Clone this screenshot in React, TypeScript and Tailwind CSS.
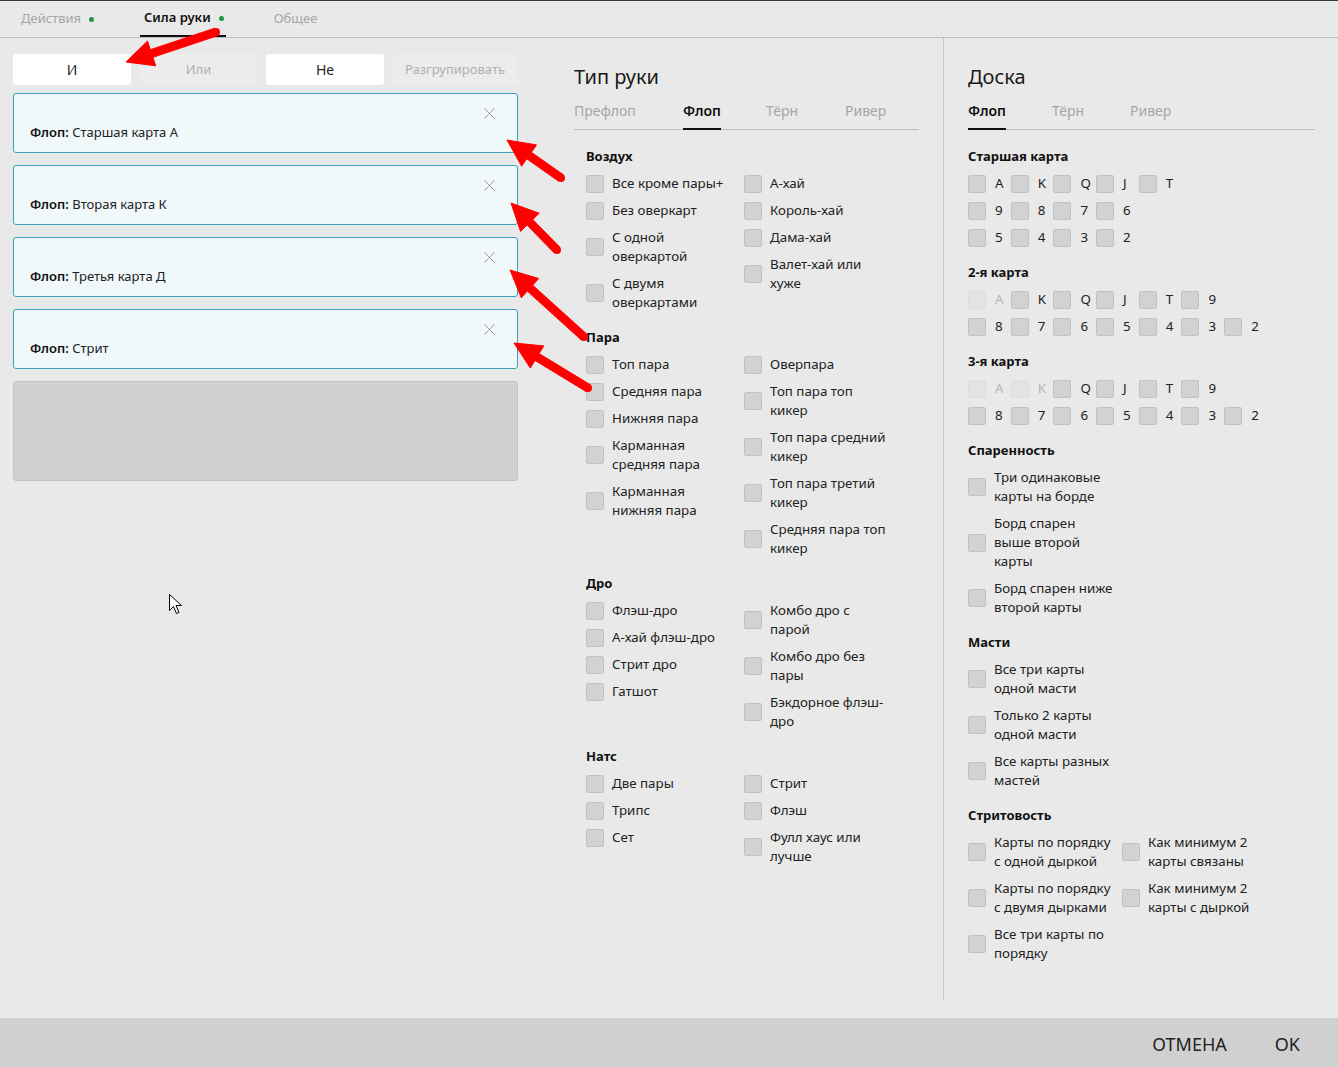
import React from "react";

function Box({ disabled }: { disabled?: boolean }) {
  return (
    <span
      className={
        disabled
          ? "block w-[18px] h-[18px] shrink-0 rounded-[2px] border border-[#dedede] bg-[#e3e3e3]"
          : "block w-[18px] h-[18px] shrink-0 rounded-[2px] border border-[#c2c2c2] bg-[#d2d2d2]"
      }
    />
  );
}

function Item({ lines }: { lines: string[] }) {
  return (
    <div className="flex items-center gap-2">
      <Box />
      <div className="text-[13.33px] leading-[19px] text-[#222] whitespace-nowrap">
        {lines.map((l, i) => (
          <div key={i}>{l}</div>
        ))}
      </div>
    </div>
  );
}

function Col({ items, w }: { items: string[][]; w?: string }) {
  return (
    <div className={"flex flex-col gap-2 " + (w ?? "")}>
      {items.map((it, i) => (
        <Item key={i} lines={it} />
      ))}
    </div>
  );
}

function SectionTitle({ children }: { children: React.ReactNode }) {
  return <div className="text-[13px] font-bold leading-[20px] text-[#111]">{children}</div>;
}

function Section({
  title,
  left,
  right,
  colW,
  first,
}: {
  title: string;
  left: string[][];
  right?: string[][];
  colW: string;
  first?: boolean;
}) {
  return (
    <div className={first ? "" : "mt-[15px]"}>
      <SectionTitle>{title}</SectionTitle>
      <div className="mt-2 flex items-start">
        <Col items={left} w={colW} />
        {right && <Col items={right} />}
      </div>
    </div>
  );
}

function Rank({ label, disabled }: { label: string; disabled?: boolean }) {
  return (
    <div className="w-[42.7px] flex items-center gap-[9px]">
      <Box disabled={disabled} />
      <span
        className={
          "text-[13.33px] leading-[19px] " + (disabled ? "text-[#b4b4b4]" : "text-[#222]")
        }
      >
        {label}
      </span>
    </div>
  );
}

function RankSection({
  title,
  rows,
  disabled,
}: {
  title: string;
  rows: string[][];
  disabled: string[];
}) {
  return (
    <div className="mt-[15px]">
      <SectionTitle>{title}</SectionTitle>
      <div className="mt-2 flex flex-col gap-2">
        {rows.map((r, i) => (
          <div key={i} className="flex">
            {r.map((l) => (
              <Rank key={l} label={l} disabled={disabled.includes(l)} />
            ))}
          </div>
        ))}
      </div>
    </div>
  );
}

function Tabs({ tabs, widths, active }: { tabs: string[]; widths: string[]; active: number }) {
  return (
    <div className="flex h-[39px] border-b border-[#bdbdbd]">
      {tabs.map((t, i) => (
        <div key={t} className={"h-[39px] -mb-px " + widths[i]}>
          <span
            className={
              "inline-block h-[39px] pt-[10px] text-[14px] leading-[20px] " +
              (i === active
                ? "font-semibold text-[#111] border-b-2 border-[#111]"
                : "text-[#a6a6a6]")
            }
          >
            {t}
          </span>
        </div>
      ))}
    </div>
  );
}

function CloseX() {
  return (
    <svg width="11" height="11" viewBox="0 0 11 11" className="absolute top-[14px] right-[22px]">
      <path d="M0.5 0.5 L10.5 10.5 M10.5 0.5 L0.5 10.5" stroke="#9a9a9a" strokeWidth="1" fill="none" />
    </svg>
  );
}

function Card({ value }: { value: string }) {
  return (
    <div className="relative h-[60px] rounded-[3px] border border-[#3aa0b6] bg-[#f0f8fa] pl-[16px] pt-[29px]">
      <CloseX />
      <div className="text-[13px] leading-[18px] text-[#222]">
        <span className="font-semibold text-[#111]">Флоп:</span> {value}
      </div>
    </div>
  );
}

function Arrow({ t, h }: { t: [number, number]; h: [number, number] }) {
  const dx = h[0] - t[0];
  const dy = h[1] - t[1];
  const len = Math.hypot(dx, dy);
  const ux = dx / len;
  const uy = dy / len;
  const nx = -uy;
  const ny = ux;
  const w = 8;
  const L = 27;
  const W = 26;
  const bx = h[0] - ux * L;
  const by = h[1] - uy * L;
  const pts = [
    [t[0] + (nx * w) / 2, t[1] + (ny * w) / 2],
    [bx + (nx * w) / 2, by + (ny * w) / 2],
    [bx + (nx * W) / 2, by + (ny * W) / 2],
    [h[0], h[1]],
    [bx - (nx * W) / 2, by - (ny * W) / 2],
    [bx - (nx * w) / 2, by - (ny * w) / 2],
    [t[0] - (nx * w) / 2, t[1] - (ny * w) / 2],
  ]
    .map((p) => p[0].toFixed(1) + "," + p[1].toFixed(1))
    .join(" ");
  return (
    <g fill="#ff0000">
      <polygon points={pts} strokeLinejoin="round" stroke="#ff0000" strokeWidth="1" />
      <circle cx={t[0]} cy={t[1]} r={w / 2} />
    </g>
  );
}

export default function App() {
  return (
    <div className="relative h-[1067px] w-full overflow-hidden flex flex-col bg-[#e9e9e9] border-t border-[#3a3a3a] font-['Noto_Sans',sans-serif]">
      {/* header */}
      <div className="h-[37px] shrink-0 border-b border-[#bcbcbc] flex pl-[17px]">
        <div className="h-full w-[82px] px-[4px] flex items-center text-[13px] text-[#a6a6a6]">
          <span>Действия</span>
          <span className="ml-[8px] w-[5px] h-[5px] rounded-full bg-[#1f9a3a]" />
        </div>
        <div className="h-full ml-[41px] pl-[4px] pr-[2px] flex items-center text-[13px] font-semibold text-[#111] border-b-2 border-[#111]">
          <span>Сила руки</span>
          <span className="ml-[8px] w-[5px] h-[5px] rounded-full bg-[#1f9a3a]" />
        </div>
        <div className="h-full ml-[44px] px-[4px] flex items-center text-[13px] text-[#a6a6a6]">
          <span>Общее</span>
        </div>
      </div>

      {/* main */}
      <div className="flex-1 flex min-h-0">
        {/* left */}
        <div className="w-[531px] shrink-0 px-[13px] pt-[16px]">
          <div className="flex">
            <div className="w-[118px] h-[31px] rounded-[3px] bg-white flex items-center justify-center text-[14px] text-[#222]">
              И
            </div>
            <div className="ml-[9px] w-[117px] h-[31px] rounded-[3px] bg-[#ececec] flex items-center justify-center text-[13px] text-[#b0b0b0]">
              Или
            </div>
            <div className="ml-[9px] w-[118px] h-[31px] rounded-[3px] bg-white flex items-center justify-center text-[14px] text-[#222]">
              Не
            </div>
            <div className="ml-[8px] flex-1 h-[31px] rounded-[3px] bg-[#ececec] flex items-center justify-center text-[13px] text-[#b0b0b0]">
              Разгрупировать
            </div>
          </div>
          <div className="mt-[8px] flex flex-col gap-[12px]">
            <Card value="Старшая карта А" />
            <Card value="Вторая карта К" />
            <Card value="Третья карта Д" />
            <Card value="Стрит" />
            <div className="h-[100px] rounded-[3px] border border-[#c3c3c3] bg-[#d0d0d0]" />
          </div>
        </div>

        {/* middle */}
        <div className="w-[412px] shrink-0 pl-[43px] pr-[24px] pt-[25px]">
          <div className="text-[20px] leading-[28px] text-[#1a1a1a]">Тип руки</div>
          <Tabs
            tabs={["Префлоп", "Флоп", "Тёрн", "Ривер"]}
            widths={["w-[109px]", "w-[83px]", "w-[79px]", ""]}
            active={1}
          />
          <div className="pl-[12px] pt-[16px]">
            <Section
              first
              title="Воздух"
              colW="w-[158px]"
              left={[["Все кроме пары+"], ["Без оверкарт"], ["С одной", "оверкартой"], ["С двумя", "оверкартами"]]}
              right={[["А-хай"], ["Король-хай"], ["Дама-хай"], ["Валет-хай или", "хуже"]]}
            />
            <Section
              title="Пара"
              colW="w-[158px]"
              left={[["Топ пара"], ["Средняя пара"], ["Нижняя пара"], ["Карманная", "средняя пара"], ["Карманная", "нижняя пара"]]}
              right={[
                ["Оверпара"],
                ["Топ пара топ", "кикер"],
                ["Топ пара средний", "кикер"],
                ["Топ пара третий", "кикер"],
                ["Средняя пара топ", "кикер"],
              ]}
            />
            <Section
              title="Дро"
              colW="w-[158px]"
              left={[["Флэш-дро"], ["А-хай флэш-дро"], ["Стрит дро"], ["Гатшот"]]}
              right={[["Комбо дро с", "парой"], ["Комбо дро без", "пары"], ["Бэкдорное флэш-", "дро"]]}
            />
            <Section
              title="Натс"
              colW="w-[158px]"
              left={[["Две пары"], ["Трипс"], ["Сет"]]}
              right={[["Стрит"], ["Флэш"], ["Фулл хаус или", "лучше"]]}
            />
          </div>
        </div>

        {/* right */}
        <div className="flex-1 border-l border-[#c9c9c9] mb-[18px] pl-[24px] pr-[23px] pt-[25px]">
          <div className="text-[20px] leading-[28px] text-[#1a1a1a]">Доска</div>
          <Tabs tabs={["Флоп", "Тёрн", "Ривер"]} widths={["w-[84px]", "w-[78px]", ""]} active={0} />
          <div className="pt-[16px]">
            <div>
              <SectionTitle>Старшая карта</SectionTitle>
              <div className="mt-2 flex flex-col gap-2">
                {[
                  ["A", "K", "Q", "J", "T"],
                  ["9", "8", "7", "6"],
                  ["5", "4", "3", "2"],
                ].map((r, i) => (
                  <div key={i} className="flex">
                    {r.map((l) => (
                      <Rank key={l} label={l} />
                    ))}
                  </div>
                ))}
              </div>
            </div>
            <RankSection
              title="2-я карта"
              rows={[
                ["A", "K", "Q", "J", "T", "9"],
                ["8", "7", "6", "5", "4", "3", "2"],
              ]}
              disabled={["A"]}
            />
            <RankSection
              title="3-я карта"
              rows={[
                ["A", "K", "Q", "J", "T", "9"],
                ["8", "7", "6", "5", "4", "3", "2"],
              ]}
              disabled={["A", "K"]}
            />
            <Section
              title="Спаренность"
              colW="w-[154px]"
              left={[
                ["Три одинаковые", "карты на борде"],
                ["Борд спарен", "выше второй", "карты"],
                ["Борд спарен ниже", "второй карты"],
              ]}
            />
            <Section
              title="Масти"
              colW="w-[154px]"
              left={[
                ["Все три карты", "одной масти"],
                ["Только 2 карты", "одной масти"],
                ["Все карты разных", "мастей"],
              ]}
            />
            <Section
              title="Стритовость"
              colW="w-[154px]"
              left={[
                ["Карты по порядку", "с одной дыркой"],
                ["Карты по порядку", "с двумя дырками"],
                ["Все три карты по", "порядку"],
              ]}
              right={[
                ["Как минимум 2", "карты связаны"],
                ["Как минимум 2", "карты с дыркой"],
              ]}
            />
          </div>
        </div>
      </div>

      {/* footer */}
      <div className="h-[49px] shrink-0 bg-[#d0d0d0] flex items-center justify-end pr-[38px] pt-[3px] gap-[48px] text-[18px] text-[#222]">
        <span>ОТМЕНА</span>
        <span>OK</span>
      </div>

      {/* annotation overlay */}
      <svg className="absolute inset-0 pointer-events-none" width="1338" height="1067" viewBox="0 0 1338 1067">
        <Arrow t={[216, 31]} h={[126, 61]} />
        <Arrow t={[561, 177]} h={[507, 139]} />
        <Arrow t={[557, 249]} h={[511, 202]} />
        <Arrow t={[584, 336]} h={[510, 269]} />
        <Arrow t={[588, 387]} h={[514, 342]} />
        <path
          d="M169.5 593.5 L169.5 609.5 L173.5 605.5 L176.5 612.5 L179 611.5 L176 604.5 L181.5 604.5 Z"
          fill="#fff"
          stroke="#000"
          strokeWidth="1"
        />
      </svg>
    </div>
  );
}
